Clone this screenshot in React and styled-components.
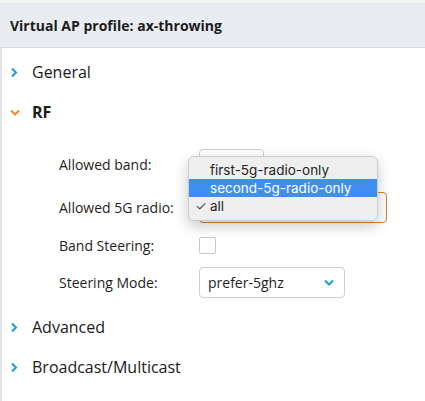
import React from 'react'
import styled, {createGlobalStyle} from 'styled-components'

const Global = createGlobalStyle`
body {
    margin: 0;
    background: #fff;
    font-family: "Open Sans", "Noto Sans", sans-serif;
    color: #1e1e1e;
}
`

const TopStrip = styled.div`
height: 3px;
background-color: #f4f4f5;
`
const Header = styled.div`
height: 44px;
background-color: #e9ecf0;
border-bottom: 1px solid #dadde1;
display: flex;
align-items: center;
padding-left: 10px;
font-size: 14px;
font-weight: 700;
color: #1c1c1c;
`
const Body = styled.div`
border-left: 2px solid #e4e4e4;
padding-top: 4px;
height: 360px;
`
const SectionHead = styled.div`
height: 40px;
display: flex;
align-items: center;
font-size: 16px;
font-weight: ${p => (p.open ? 700 : 400)};
color: #1a1a1a;
`
const Chevron = styled.span`
width: 30px;
display: flex;
justify-content: flex-start;
padding-left: 8px;
box-sizing: border-box;
`
const Form = styled.div`
position: relative;
display: grid;
grid-template-columns: 140px auto;
row-gap: 12px;
padding: 17px 0 9px 57px;
`
const Label = styled.div`
font-size: 14px;
display: flex;
align-items: center;
color: #1e1e1e;
`
const Control = styled.div`
display: flex;
align-items: center;
`
const Select = styled.div`
box-sizing: border-box;
height: 31px;
width: ${p => p.width}px;
border: 1px solid ${p => (p.focused ? '#d2832f' : '#cfcfcf')};
border-radius: 4px;
display: flex;
align-items: center;
justify-content: space-between;
padding: 0 10px 0 8px;
font-size: 14px;
background: #fff;
`
const Checkbox = styled.div`
width: 17px;
height: 17px;
box-sizing: border-box;
border: 1px solid #c9c9c9;
border-radius: 2px;
background: #fff;
`
const CheckRow = styled(Control)`
height: 20px;
`
const Popup = styled.div`
position: absolute;
left: 186px;
top: 24px;
width: 190px;
box-sizing: border-box;
padding: 4px 0 5px;
background: #efefef;
border: 1px solid #cdcdcd;
border-radius: 6px;
box-shadow: 0 5px 14px rgba(0, 0, 0, 0.22);
font-family: Inter, "Liberation Sans", sans-serif;
font-size: 13.5px;
`
const Option = styled.div`
position: relative;
height: 18px;
line-height: 18px;
padding-left: 21px;
color: ${p => (p.active ? '#fff' : '#242424')};
background: ${p => (p.active ? '#3f8ef2' : 'transparent')};
`
const Check = styled.span`
position: absolute;
left: 6px;
top: 0;
font-weight: 300;
`

const Right = () => (
    <svg width="8" height="11" viewBox="0 0 8 11">
        <path d="M2 1.5 L6 5.5 L2 9.5" fill="none" stroke="#1b9ad6" strokeWidth="2" />
    </svg>
)
const Down = ({color = '#f5891f', w = 10}) => (
    <svg width={w} height="7" viewBox="0 0 10 7">
        <path d="M1 1.5 L5 5.5 L9 1.5" fill="none" stroke={color} strokeWidth="2" />
    </svg>
)

function App() {
    return (
        <React.Fragment>
            <Global />
            <TopStrip />
            <Header>Virtual AP profile: ax-throwing</Header>
            <Body>
                <SectionHead><Chevron><Right /></Chevron>General</SectionHead>
                <SectionHead open><Chevron><Down /></Chevron>RF</SectionHead>
                <Form>
                    <Label>Allowed band:</Label>
                    {/* value hidden under the open popup */}
                    <Control><Select width={65} /></Control>
                    <Label>Allowed 5G radio:</Label>
                    <Control><Select width={188} focused /></Control>
                    <Label>Band Steering:</Label>
                    <CheckRow><Checkbox /></CheckRow>
                    <Label>Steering Mode:</Label>
                    <Control>
                        <Select width={146}>prefer-5ghz<Down color="#1b9ad6" /></Select>
                    </Control>
                    <Popup>
                        <Option>first-5g-radio-only</Option>
                        <Option active>second-5g-radio-only</Option>
                        <Option><Check>✓</Check>all</Option>
                    </Popup>
                </Form>
                <SectionHead><Chevron><Right /></Chevron>Advanced</SectionHead>
                <SectionHead><Chevron><Right /></Chevron>Broadcast/Multicast</SectionHead>
            </Body>
        </React.Fragment>
    )
}

export default App
